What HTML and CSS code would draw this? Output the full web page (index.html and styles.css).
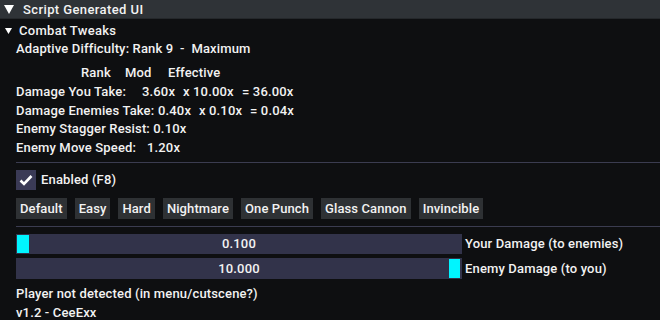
FILE: index.html
```html
<!DOCTYPE html>
<html lang="en">
<head>
  <meta charset="UTF-8">
  <title>Script Generated UI</title>
  <link rel="stylesheet" href="styles.css">
</head>
<body>
  <!-- Window title -->
  <div class="titlebar">
    <svg class="arrow-big" width="10" height="9" viewBox="0 0 10 9"><polygon points="0,0 10,0 5,9" fill="#fff"/></svg>
    <span>Script Generated UI</span>
  </div>

  <div class="window">
    <div class="tree-node">
      <svg class="arrow-small" width="7" height="6" viewBox="0 0 7 6"><polygon points="0,0 7,0 3.5,6" fill="#fff"/></svg>
      <span>Combat Tweaks</span>
    </div>

    <div class="section">
      <div class="line">Adaptive Difficulty: Rank 9&nbsp; -&nbsp; Maximum</div>

      <div class="stats">
        <div class="row head">
          <span class="c-rank">Rank</span><span class="c-mod">Mod</span><span>Effective</span>
        </div>
        <div class="row">
          <span class="w-you">Damage You Take:</span><span class="w-v41">3.60x</span><span class="w-v59">x 10.00x</span><span>= 36.00x</span>
        </div>
        <div class="row">
          <span class="w-enemies">Damage Enemies Take:</span><span class="w-v41">0.40x</span><span class="w-v51">x 0.10x</span><span>= 0.04x</span>
        </div>
        <div class="row">Enemy Stagger Resist: 0.10x</div>
        <div class="row">
          <span class="w-move">Enemy Move Speed:</span><span>1.20x</span>
        </div>
      </div>

      <div class="separator sep-top"></div>

      <label class="checkbox-row">
        <span class="checkbox">
          <svg width="20" height="20" viewBox="0 0 20 20"><polyline points="4.5,10.5 8,14 15.5,6" fill="none" stroke="#fff" stroke-width="2.6"/></svg>
        </span>
        <span>Enabled (F8)</span>
      </label>

      <div class="presets">
        <button>Default</button>
        <button>Easy</button>
        <button>Hard</button>
        <button>Nightmare</button>
        <button>One Punch</button>
        <button>Glass Cannon</button>
        <button>Invincible</button>
      </div>

      <div class="separator sep-mid"></div>

      <div class="slider-row first">
        <div class="slider">
          <span class="grab grab-left"></span>
          <span class="value">0.100</span>
        </div>
        <span class="slider-label">Your Damage (to enemies)</span>
      </div>
      <div class="slider-row second">
        <div class="slider">
          <span class="grab grab-right"></span>
          <span class="value">10.000</span>
        </div>
        <span class="slider-label">Enemy Damage (to you)</span>
      </div>

      <div class="line tall status">Player not detected (in menu/cutscene?)</div>
      <div class="line tall">v1.2 - CeeExx</div>
    </div>
  </div>
</body>
</html>
```

FILE: styles.css
```css
body {
  margin: 0;
  background: #0e0f11;
  color: #f2f2f2;
  font-family: Roboto, 'Noto Sans', sans-serif;
  font-size: 13px;
  font-weight: 500;
  letter-spacing: 0.15px;
  height: 320px;
  overflow: hidden;
}

.titlebar {
  height: 19px;
  background: #2f3337;
  border-bottom: 1px solid #25282b;
  display: flex;
  align-items: center;
  padding-left: 4px;
  box-sizing: border-box;
}

.titlebar span {
  margin-left: 9px;
  letter-spacing: 0.4px;
}

.arrow-big {
  margin-top: 1px;
}

.window {
  padding-top: 2px;
}

.tree-node {
  height: 19px;
  display: flex;
  align-items: center;
  padding-left: 5px;
}

.tree-node span {
  margin-left: 7px;
  letter-spacing: 0.3px;
}

.section {
  padding-left: 16px;
}

.line {
  height: 18px;
  line-height: 18px;
}

.line.tall {
  height: 19px;
  line-height: 19px;
}

.stats {
  margin-top: 6px;
}

.row {
  display: flex;
  height: 18.75px;
  line-height: 18.75px;
}

.row.head {
  padding-left: 65px;
}

.c-rank { width: 44px; }
.c-mod { width: 43px; }

.w-you { width: 126px; }
.w-enemies { width: 142px; }
.w-move { width: 131px; }
.w-v41 { width: 41px; }
.w-v59 { width: 59px; }
.w-v51 { width: 51px; }

.separator {
  height: 1px;
  background: #3b3c50;
}

.sep-top {
  margin-top: 4px;
}

.checkbox-row {
  display: flex;
  align-items: center;
  margin-top: 7px;
  height: 20px;
}

.checkbox {
  width: 20px;
  height: 20px;
  background: #3a3a56;
  display: block;
  margin-right: 5px;
}

.checkbox svg {
  display: block;
}

.presets {
  display: flex;
  gap: 8px;
  margin-top: 8px;
}

.presets button {
  height: 21px;
  padding: 0 4px;
  background: #2e3134;
  color: #f2f2f2;
  border: none;
  font: inherit;
  letter-spacing: 0.1px;
}

.sep-mid {
  margin-top: 7px;
}

.slider-row {
  display: flex;
  align-items: center;
}

.slider-row.first {
  margin-top: 7px;
}

.slider-row.second {
  margin-top: 4px;
}

.slider {
  position: relative;
  width: 446px;
  height: 20px;
  background: #32334a;
  display: flex;
  align-items: center;
  justify-content: center;
}

.second .slider {
  height: 21px;
}

.grab {
  position: absolute;
  top: 1px;
  bottom: 1px;
  width: 12px;
  background: #00f5ff;
}

.grab-left { left: 1px; }
.grab-right { right: 2px; width: 11px; }

.slider-label {
  margin-left: 3px;
}

.status {
  margin-top: 5px;
}
```
